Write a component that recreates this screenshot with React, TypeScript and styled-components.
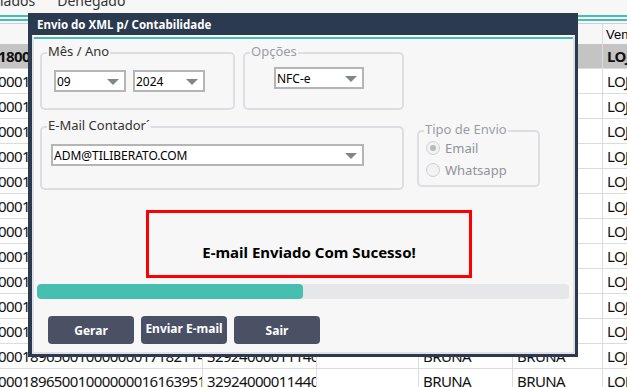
import styled, { createGlobalStyle } from 'styled-components';

const GlobalStyle = createGlobalStyle`
  html, body {
    margin: 0;
    padding: 0;
    background: #f7f7f7;
  }
  body {
    font-family: 'Noto Sans', 'Open Sans', sans-serif;
    overflow: hidden;
  }
`;

const TEAL = '#45bfb0';

const COLS = [203, 114, 102, 94, 90, 60];

const HEADERS = ['', '', '', '', '', 'Vendedor'];

const ROWS = [
  ['18000189650010000000171821', '32924000011440', '', 'BRUNA', 'BRUNA', 'LOJA 01'],
  ['00018965001000000017182111', '32924000011440', '', 'BRUNA', 'BRUNA', 'LOJA 01'],
  ['00018965001000000017182112', '32924000011440', '', 'BRUNA', 'BRUNA', 'LOJA 01'],
  ['00018965001000000017182113', '32924000011440', '', 'BRUNA', 'BRUNA', 'LOJA 01'],
  ['00018965001000000017182114', '32924000011440', '', 'BRUNA', 'BRUNA', 'LOJA 01'],
  ['00018965001000000017182115', '32924000011440', '', 'BRUNA', 'BRUNA', 'LOJA 01'],
  ['00018965001000000017182116', '32924000011440', '', 'BRUNA', 'BRUNA', 'LOJA 01'],
  ['00018965001000000017182117', '32924000011440', '', 'BRUNA', 'BRUNA', 'LOJA 01'],
  ['00018965001000000017182118', '32924000011440', '', 'BRUNA', 'BRUNA', 'LOJA 01'],
  ['00018965001000000017182119', '32924000011440', '', 'BRUNA', 'BRUNA', 'LOJA 01'],
  ['00018965001000000017182120', '32924000011440', '', 'BRUNA', 'BRUNA', 'LOJA 01'],
  ['00018965001000000017182121', '32924000011440', '', 'BRUNA', 'BRUNA', 'LOJA 01'],
  ['00018965001000000017182114', '32924000011140', '', 'BRUNA', 'BRUNA', 'LOJA 01'],
  ['00018965001000000016163951', '32924000011440', '', 'BRUNA', 'BRUNA', 'LOJA 01'],
];

function Combo({ value, width }: { value: string; width: number }) {
  return (
    <ComboBox $width={width}>
      <ComboText>{value}</ComboText>
      <Arrow />
    </ComboBox>
  );
}

function App() {
  return (
    <>
      <GlobalStyle />
      <Page>
        <TabStrip>
          <TabLabel>Cancelados</TabLabel>
          <TabLabel>Denegado</TabLabel>
        </TabStrip>
        <DoubleRule />
        <Grid>
          {HEADERS.map((h, i) => (
            <HeadCell key={i}>{h}</HeadCell>
          ))}
          {ROWS.map((row, r) =>
            row.map((v, c) => (
              <Cell key={`${r}-${c}`} $selected={r === 0} $first={c === 0}>
                {v}
              </Cell>
            ))
          )}
        </Grid>

        <Dialog>
          <TitleBar>Envio do XML p/ Contabilidade</TitleBar>
          <Body>
            <TealLine />
            <TopRow>
              <GroupBox $width={195} $height={58}>
                <Legend>Mês / Ano</Legend>
                <ComboRow $top={16} $left={12}>
                  <Combo value="09" width={72} />
                  <Combo value="2024" width={72} />
                </ComboRow>
              </GroupBox>
              <GroupBox $width={161} $height={58}>
                <Legend $muted>Opções</Legend>
                <ComboRow $top={13} $left={29}>
                  <Combo value="NFC-e" width={90} />
                </ComboRow>
              </GroupBox>
            </TopRow>
            <MidRow>
              <GroupBox $width={364} $height={64}>
                <Legend>E-Mail Contador´</Legend>
                <ComboRow $top={16} $left={9}>
                  <Combo value="ADM@TILIBERATO.COM" width={313} />
                </ComboRow>
              </GroupBox>
              <SideGroup $width={123} $height={57}>
                <Legend $muted>Tipo de Envio</Legend>
                <RadioList>
                  <RadioItem>
                    <Radio $checked />
                    Email
                  </RadioItem>
                  <RadioItem>
                    <Radio />
                    Whatsapp
                  </RadioItem>
                </RadioList>
              </SideGroup>
            </MidRow>
            <MessageBox>E-mail Enviado Com Sucesso!</MessageBox>
            <Progress>
              <ProgressFill style={{ width: `${(266 / 532) * 100}%` }} />
            </Progress>
            <Buttons>
              <Button>Gerar</Button>
              <Button $raised>Enviar E-mail</Button>
              <Button>Sair</Button>
            </Buttons>
          </Body>
        </Dialog>
      </Page>
    </>
  );
}

export default App;

const Page = styled.div`
  position: relative;
  width: 627px;
  height: 387px;
  overflow: hidden;
  background: #f7f7f7;
`;

const TabStrip = styled.div`
  display: flex;
  gap: 22px;
  height: 15px;
  margin-left: -40px;
  overflow: hidden;
`;

const TabLabel = styled.span`
  margin-top: -8px;
  font-size: 14px;
  line-height: 18px;
  color: #333;
  white-space: nowrap;
`;

const DoubleRule = styled.div`
  height: 2px;
  border-top: 2px solid ${TEAL};
  border-bottom: 2px solid ${TEAL};
  margin-bottom: 2px;
`;

const Grid = styled.div`
  display: grid;
  grid-template-columns: ${COLS.map((c) => `${c}px`).join(' ')};
  border-top: 1px solid #cfcfcf;
  background: #fff;
`;

const HeadCell = styled.div`
  height: 20px;
  box-sizing: border-box;
  padding: 0 3px;
  background: #f7f7f7;
  border-right: 1px solid #dcdcdc;
  font-family: 'Liberation Sans', sans-serif;
  font-size: 13px;
  line-height: 22px;
  color: #000;
  white-space: nowrap;
  overflow: hidden;
`;

const Cell = styled.div<{ $selected?: boolean; $first?: boolean }>`
  height: 25px;
  box-sizing: border-box;
  padding: 0 ${(p) => (p.$first ? 0 : 4)}px;
  text-indent: ${(p) => (p.$first ? -2 : 0)}px;
  background: ${(p) => (p.$selected ? '#c4c4c4' : '#fff')};
  border-right: 1px solid #dcdcdc;
  border-bottom: 1px solid #dcdcdc;
  font-family: 'Noto Sans', sans-serif;
  font-size: 15px;
  letter-spacing: -0.6px;
  font-weight: ${(p) => (p.$selected ? 700 : 400)};
  line-height: 25px;
  color: #111;
  white-space: nowrap;
  overflow: hidden;
`;

const Dialog = styled.div`
  position: absolute;
  left: 28px;
  top: 13px;
  width: 550px;
  height: 344px;
  display: flex;
  flex-direction: column;
  background: #2b3a4f;
`;

const TitleBar = styled.div`
  height: 22px;
  padding: 1px 0 0 9px;
  box-sizing: border-box;
  font-size: 11.5px;
  font-weight: 700;
  line-height: 22px;
  color: #fff;
`;

const Body = styled.div`
  display: flex;
  flex-direction: column;
  margin: 0 3px 3px 4px;
  flex: 1;
  background: #f7f7f7;
  border: 2px solid #dfe1e4;
  border-top-color: #fff;
`;

const TealLine = styled.div`
  height: 2px;
  background: ${TEAL};
`;

const TopRow = styled.div`
  display: flex;
  gap: 8px;
  margin: 13px 0 0 6px;
`;

const MidRow = styled.div`
  display: flex;
  align-items: flex-start;
  gap: 13px;
  margin: 16px 0 0 6px;
`;

const GroupBox = styled.div<{ $width: number; $height: number }>`
  position: relative;
  box-sizing: border-box;
  width: ${(p) => p.$width}px;
  height: ${(p) => p.$height}px;
  border: 2px solid #dcdee1;
  border-radius: 5px;
`;

const SideGroup = styled(GroupBox)`
  margin-top: 4px;
`;

const Legend = styled.span<{ $muted?: boolean }>`
  position: absolute;
  left: 5px;
  top: -11px;
  padding: 0 1px;
  background: #f7f7f7;
  font-size: 13px;
  line-height: 16px;
  color: ${(p) => (p.$muted ? '#9a9ea4' : '#333')};
  white-space: nowrap;
`;

const ComboRow = styled.div<{ $top: number; $left: number }>`
  display: flex;
  gap: 7px;
  margin: ${(p) => p.$top}px 0 0 ${(p) => p.$left}px;
`;

const ComboBox = styled.div<{ $width: number }>`
  display: flex;
  align-items: center;
  box-sizing: border-box;
  width: ${(p) => p.$width}px;
  height: 22px;
  border: 2px solid #b5b5b5;
  background: #fff;
`;

const ComboText = styled.span`
  padding-left: 1px;
  font-size: 12px;
  color: #000;
  white-space: nowrap;
`;

const Arrow = styled.span`
  margin: 1px 5px 0 auto;
  width: 0;
  height: 0;
  border-left: 6px solid transparent;
  border-right: 6px solid transparent;
  border-top: 6px solid #80868f;
`;

const RadioList = styled.div`
  display: flex;
  flex-direction: column;
  gap: 4px;
  margin: 7px 0 0 7px;
`;

const RadioItem = styled.div`
  display: flex;
  align-items: center;
  gap: 5px;
  height: 18px;
  font-size: 13px;
  color: #8f949b;
`;

const Radio = styled.span<{ $checked?: boolean }>`
  position: relative;
  box-sizing: border-box;
  width: 14px;
  height: 14px;
  border-radius: 50%;
  border: 1px solid #cfd1d4;
  background: #f2f2f2;

  &::after {
    content: '';
    display: ${(p) => (p.$checked ? 'block' : 'none')};
    position: absolute;
    left: 3px;
    top: 3px;
    width: 6px;
    height: 6px;
    border-radius: 50%;
    background: #b8b9bb;
  }
`;

const MessageBox = styled.div`
  display: flex;
  align-items: center;
  justify-content: center;
  box-sizing: border-box;
  width: 326px;
  height: 68px;
  margin: 20px 0 0 112px;
  padding-top: 15px;
  border: 3px solid #ff0000;
  font-size: 15px;
  font-weight: 700;
  color: #000;
`;

const Progress = styled.div`
  width: 532px;
  height: 15px;
  margin: 6px 0 0 3px;
  border-radius: 4px;
  background: #e6e7e9;
  overflow: hidden;
`;

const ProgressFill = styled.div`
  height: 100%;
  border-radius: 4px;
  background: ${TEAL};
`;

const Buttons = styled.div`
  display: flex;
  gap: 7px;
  margin: 17px 0 0 14px;
`;

const Button = styled.button<{ $raised?: boolean }>`
  width: 86px;
  height: 28px;
  padding: 0 0 ${(p) => (p.$raised ? 4 : 0)}px;
  border: none;
  border-radius: 4px;
  background: #4b5165;
  font-family: 'Noto Sans', sans-serif;
  font-size: 12px;
  font-weight: 700;
  color: #fff;
`;
